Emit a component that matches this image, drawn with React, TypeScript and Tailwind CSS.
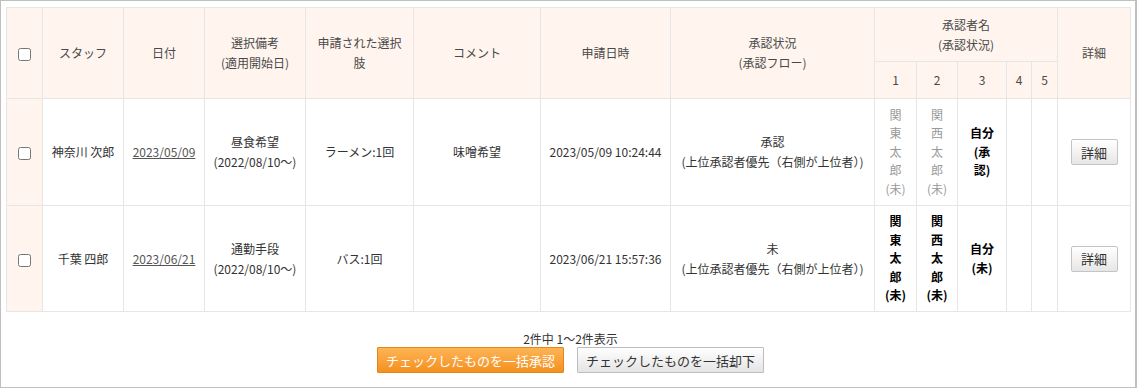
import React from 'react';

const cols = [36, 81, 81, 101, 108, 127, 130, 204, 42, 41, 49, 25, 26, 73];

const th = 'border border-[#e6e6e6] bg-[#fff5ee] font-normal text-[#4a4a4a] text-center align-middle px-2';
const td = 'border border-[#e6e6e6] text-center align-middle px-2 text-[#333]';

type Row = {
  staff: string;
  date: string;
  note: string[];
  choice: string;
  comment: string;
  applied: string;
  status: string;
  approvers: { lines: string[]; muted: boolean }[];
  h: string;
};

const rows: Row[] = [
  {
    staff: '神奈川 次郎',
    date: '2023/05/09',
    note: ['昼食希望', '(2022/08/10〜)'],
    choice: 'ラーメン:1回',
    comment: '味噌希望',
    applied: '2023/05/09 10:24:44',
    status: '承認',
    approvers: [
      { lines: ['関', '東', '太', '郎', '(未)'], muted: true },
      { lines: ['関', '西', '太', '郎', '(未)'], muted: true },
      { lines: ['自分', '(承', '認)'], muted: false },
    ],
    h: 'h-[107px]',
  },
  {
    staff: '千葉 四郎',
    date: '2023/06/21',
    note: ['通勤手段', '(2022/08/10〜)'],
    choice: 'バス:1回',
    comment: '',
    applied: '2023/06/21 15:57:36',
    status: '未',
    approvers: [
      { lines: ['関', '東', '太', '郎', '(未)'], muted: false },
      { lines: ['関', '西', '太', '郎', '(未)'], muted: false },
      { lines: ['自分', '(未)'], muted: false },
    ],
    h: 'h-[106px]',
  },
];

const Check = () => (
  <input type="checkbox" className="w-[13px] h-[13px] align-middle m-0 accent-[#666]" />
);

export default function App() {
  return (
    <div
      className="w-[1137px] h-[388px] border border-r-2 border-[#c0c0c0] bg-white pt-[6px] pl-[5px] text-[12px] leading-[20px]"
      style={{ fontFamily: '"Noto Sans CJK JP", "Noto Sans", sans-serif' }}
    >
      <table className="table-fixed border-collapse w-[1125px]">
        <colgroup>
          {cols.map((w, i) => (
            <col key={i} style={{ width: w }} />
          ))}
        </colgroup>
        <thead>
          <tr className="h-[54px]">
            <th rowSpan={2} className={th}>
              <Check />
            </th>
            <th rowSpan={2} className={th}>スタッフ</th>
            <th rowSpan={2} className={th}>日付</th>
            <th rowSpan={2} className={th}>
              選択備考<br />(適用開始日)
            </th>
            <th rowSpan={2} className={th}>
              申請された選択<br />肢
            </th>
            <th rowSpan={2} className={th}>コメント</th>
            <th rowSpan={2} className={th}>申請日時</th>
            <th rowSpan={2} className={th}>
              承認状況<br />(承認フロー)
            </th>
            <th colSpan={5} className={th}>
              承認者名<br />(承認状況)
            </th>
            <th rowSpan={2} className={th}>詳細</th>
          </tr>
          <tr className="h-[37px]">
            {[1, 2, 3, 4, 5].map((n) => (
              <th key={n} className={th + ' px-0'}>{n}</th>
            ))}
          </tr>
        </thead>
        <tbody>
          {rows.map((r, i) => (
            <tr key={i} className={r.h}>
              <td className={td + ' bg-[#fff5ee]'}>
                <Check />
              </td>
              <td className={td + ' px-0'}>{r.staff}</td>
              <td className={td + ' px-0'}>
                <a href="#" className="underline text-[#555]">{r.date}</a>
              </td>
              <td className={td}>
                {r.note[0]}<br />{r.note[1]}
              </td>
              <td className={td}>{r.choice}</td>
              <td className={td}>{r.comment}</td>
              <td className={td + ' px-0'}>{r.applied}</td>
              <td className={td + ' px-0'}>
                {r.status}<br />(上位承認者優先（右側が上位者）)
              </td>
              {r.approvers.map((a, j) => (
                <td
                  key={j}
                  className={
                    'border border-[#e6e6e6] text-center align-middle px-0 leading-[18.5px] ' +
                    (a.muted ? 'text-[#999] font-normal' : 'text-black font-bold')
                  }
                >
                  {a.lines.map((l, k) => (
                    <div key={k}>{l}</div>
                  ))}
                </td>
              ))}
              <td className={td}></td>
              <td className={td}></td>
              <td className={td + ' px-0'}>
                <button className="w-[47px] h-[26px] border border-[#c4c4c4] rounded-[2px] bg-gradient-to-b from-white to-[#e6e6e6] text-[13px] text-[#333] leading-none">
                  詳細
                </button>
              </td>
            </tr>
          ))}
        </tbody>
      </table>
      <div className="flex flex-col items-center mt-[19px]">
        <div className="text-[12px] leading-[16px] text-[#333]">2件中 1〜2件表示</div>
        <div className="flex gap-[13px]">
          <button className="w-[187px] h-[26px] border border-[#e0891a] rounded-[1px] bg-gradient-to-b from-[#fdb453] to-[#f5901c] text-white text-[13px] leading-none">
            チェックしたものを一括承認
          </button>
          <button className="w-[187px] h-[26px] border border-[#bdbdbd] rounded-[1px] bg-gradient-to-b from-white to-[#e4e4e4] text-[#333] text-[13px] leading-none">
            チェックしたものを一括却下
          </button>
        </div>
      </div>
    </div>
  );
}
